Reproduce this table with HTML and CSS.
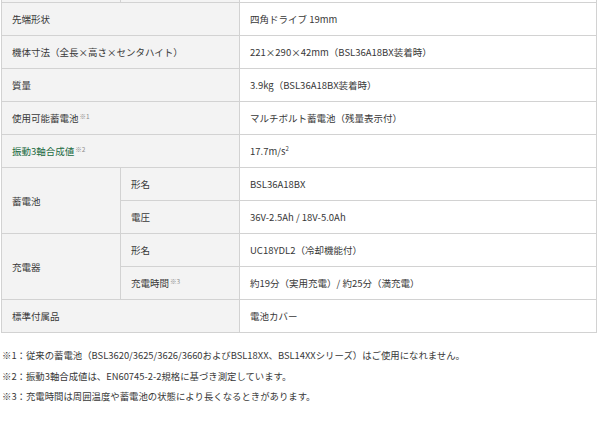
FILE: index.html
```html
<!DOCTYPE html>
<html lang="ja">
<head>
<meta charset="utf-8">
<link rel="stylesheet" href="styles.css">
</head>
<body>
<table class="spec">
  <colgroup>
    <col class="c1"><col class="c2"><col class="c3">
  </colgroup>
  <tr class="cut">
    <th></th><th></th><td></td>
  </tr>
  <tr>
    <th colspan="2">先端形状</th><td>四角ドライブ 19mm</td>
  </tr>
  <tr>
    <th colspan="2">機体寸法（全長<span class="x">×</span>高さ<span class="x">×</span>センタハイト）</th><td>221<span class="x">×</span>290<span class="x">×</span>42mm（BSL36A18BX装着時）</td>
  </tr>
  <tr>
    <th colspan="2">質量</th><td>3.9kg（BSL36A18BX装着時）</td>
  </tr>
  <tr>
    <th colspan="2">使用可能蓄電池<sup class="note">※1</sup></th><td>マルチボルト蓄電池（残量表示付）</td>
  </tr>
  <tr>
    <th colspan="2" class="green">振動3軸合成値<sup class="note">※2</sup></th><td>17.7m/s<sup class="pow">2</sup></td>
  </tr>
  <tr>
    <th rowspan="2">蓄電池</th><th>形名</th><td>BSL36A18BX</td>
  </tr>
  <tr>
    <th>電圧</th><td>36V-2.5Ah / 18V-5.0Ah</td>
  </tr>
  <tr>
    <th rowspan="2">充電器</th><th>形名</th><td>UC18YDL2（冷却機能付）</td>
  </tr>
  <tr>
    <th>充電時間<sup class="note">※3</sup></th><td>約19分（実用充電）/ 約25分（満充電）</td>
  </tr>
  <tr>
    <th colspan="2">標準付属品</th><td>電池カバー</td>
  </tr>
</table>
<ul class="notes">
  <li>※1：従来の蓄電池（BSL3620/3625/3626/3660およびBSL18XX、BSL14XXシリーズ）はご使用になれません。</li>
  <li>※2：振動3軸合成値は、EN60745-2-2規格に基づき測定しています。</li>
  <li>※3：充電時間は周囲温度や蓄電池の状態により長くなるときがあります。</li>
</ul>
</body>
</html>
```
FILE: styles.css
```css
html, body {
  margin: 0;
  padding: 0;
  background: #fff;
}
body {
  font-family: "Noto Sans CJK JP", "Noto Sans", sans-serif;
  font-size: 9.5px;
  color: #383838;
}
.x {
  font-feature-settings: "fwid";
}
.spec {
  border-collapse: collapse;
  margin-left: 1px;
  width: 596px;
  table-layout: fixed;
}
.c1 { width: 119px; }
.c2 { width: 119px; }
.spec th, .spec td {
  border: 1px solid #d2d2d2;
  height: 32px;
  padding: 0 10px;
  text-align: left;
  vertical-align: middle;
  font-weight: normal;
  line-height: 14px;
}
.spec th {
  background: #f3f3f3;
}
.spec td {
  background: #fff;
}
.spec tr.cut th, .spec tr.cut td {
  height: 2px;
  border-top: none;
}
.green {
  color: #21693f;
}
.note {
  font-size: 6.5px;
  color: #8e8e8e;
  vertical-align: 3px;
  line-height: 0;
  margin-left: 1px;
}
.pow {
  font-size: 6px;
  vertical-align: 4px;
  line-height: 0;
}
.notes {
  list-style: none;
  margin: 12px 0 0 2px;
  padding: 0;
  font-size: 9.4px;
}
.notes li {
  line-height: 20.5px;
}
```
